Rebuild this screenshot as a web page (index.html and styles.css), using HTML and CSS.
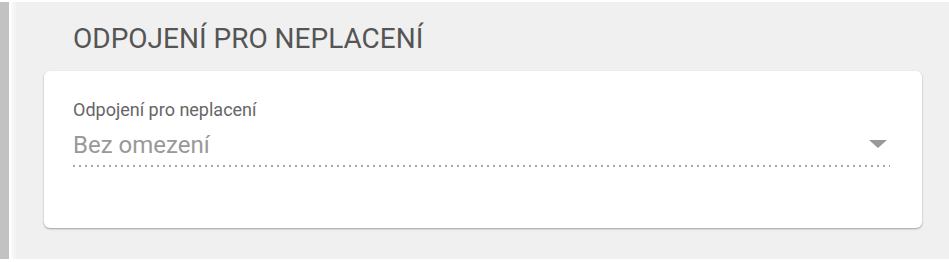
FILE: index.html
```html
<!DOCTYPE html>
<html lang="cs">
<head>
    <meta charset="UTF-8">
    <meta name="viewport" content="width=device-width, initial-scale=1.0">
    <title>Odpojení pro neplacení</title>
    <link rel="stylesheet" href="styles.css">
</head>
<body>
    <div class="page">
        <div class="side-bar"></div>
        <div class="side-gap"></div>
        <div class="panel">
            <h2 class="panel-title">ODPOJENÍ PRO NEPLACENÍ</h2>

            <!-- Karta s výběrem -->
            <div class="card">
                <label class="field-label" for="odpojeni">Odpojení pro neplacení</label>
                <div class="select-field" id="odpojeni">
                    <span class="select-value">Bez omezení</span>
                    <span class="select-arrow"></span>
                </div>
            </div>
        </div>
    </div>
</body>
</html>
```

FILE: styles.css
```css
body {
    margin: 0;
    background-color: #fff;
    font-family: Roboto, "Noto Sans", Arial, sans-serif;
}

.page {
    display: flex;
    margin-top: 2px;
    height: 257px;
}

.side-bar {
    width: 9px;
    background-color: #c2c2c2;
}

.side-gap {
    width: 7px;
    background: linear-gradient(to right, #fff 0, #fff 2px, #f8f8f8 3px, #f3f3f3 7px);
}

.panel {
    flex: 1;
    background-color: #f0f0f0;
    padding: 0 27px 0 28px;
}

.panel-title {
    margin: 0;
    padding: 20px 0 0 29px;
    height: 49px;
    font-size: 28px;
    line-height: 33px;
    font-weight: 400;
    color: #555;
}

.card {
    background-color: #fff;
    border-radius: 6px;
    box-shadow: 0 1px 2px rgba(0, 0, 0, 0.35);
    height: 157px;
    box-sizing: border-box;
    padding: 28px 32px 0 29px;
}

.field-label {
    display: block;
    font-size: 18px;
    line-height: 21px;
    color: #666;
}

.select-field {
    display: flex;
    align-items: flex-start;
    justify-content: space-between;
    margin-top: 11px;
    padding-bottom: 8px;
    background-image: repeating-linear-gradient(to right, #a8a8a8 0, #a8a8a8 2px, transparent 2px, transparent 6px);
    background-size: 100% 2px;
    background-position: left bottom;
    background-repeat: no-repeat;
}

.select-value {
    font-size: 24px;
    line-height: 28px;
    color: #999;
}

.select-arrow {
    width: 0;
    height: 0;
    margin-top: 9px;
    margin-right: 3px;
    border-left: 9px solid transparent;
    border-right: 9px solid transparent;
    border-top: 8px solid #999;
}
```
